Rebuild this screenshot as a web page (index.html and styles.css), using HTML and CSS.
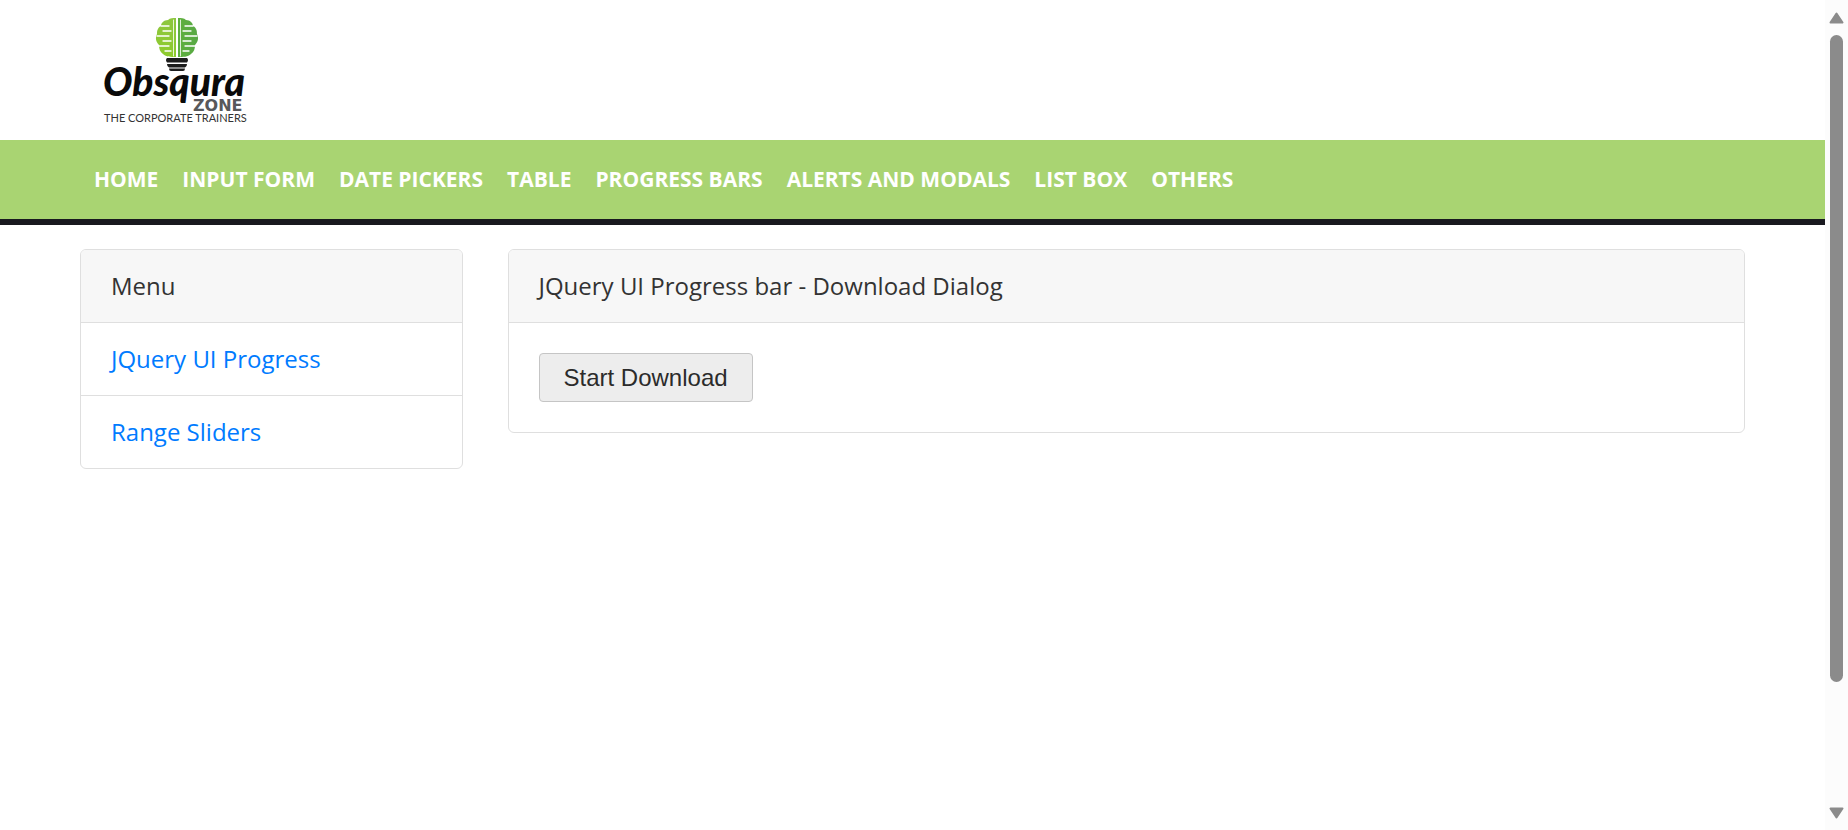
FILE: index.html
```html
<!DOCTYPE html>
<html lang="en">
<head>
<meta charset="utf-8">
<title>Obsqura Zone</title>
<link rel="stylesheet" href="styles.css">
</head>
<body>
<div class="page">
  <header class="header">
    <a class="logo" href="#" aria-label="Obsqura Zone home">
      <svg class="logo-art" viewBox="0 0 152 112" role="img" aria-label="Obsqura Zone, the corporate trainers">
        <defs>
          <linearGradient id="leafA" x1="0" y1="0" x2="0" y2="1"><stop offset="0" stop-color="#8dc63f"/><stop offset="1" stop-color="#8ecb2c"/></linearGradient>
          <linearGradient id="leafB" x1="0" y1="0" x2="1" y2="0"><stop offset="0" stop-color="#5fb03c"/><stop offset="1" stop-color="#57a845"/></linearGradient>
        </defs>
        <path fill="url(#leafA)" d="M76 4 C73 4 70 4 68 6 C64 6 61 9 61 12 C57 14 57 18 57 20 C55 24 56 28 59 31 C59 35 60 38 63 40 C66 43 71 43 76 43 Z"/>
        <path fill="url(#leafB)" d="M78 4 C81 4 84 4 86 6 C90 6 93 9 93 12 C97 14 97 18 97 20 C99 24 98 28 95 31 C95 35 94 38 91 40 C88 43 83 43 78 43 Z"/>
        <g fill="none" stroke="#fff" stroke-width="1.3" stroke-linecap="round">
          <path d="M77 3V44M73.500 6V42M80.500 6V42" stroke-width="0.800"/>
          <path d="M61 12H69M63 17H71M57 22H69M63 27H71M58 32H69M65 37H71"/>
          <path d="M93 12H85M91 17H83M97 22H85M91 27H83M96 32H85M89 37H83"/>
        </g>
        <path fill="#1c1c1c" d="M67 44H87Q89 46 87 48.500H67Q65 46 67 44ZM67 50H87Q87 53 85 53.500H69Q67 53 67 50ZM69 54.500H85Q85 57 83 57H71Q69 57 69 54.500Z"/>
        <text class="logo-name" x="3" y="82">Obsqura</text>
        <text class="logo-zone" x="93" y="97">ZONE</text>
        <text class="logo-tag" x="4" y="108">THE CORPORATE TRAINERS</text>
      </svg>
    </a>
  </header>
  <nav class="nav" aria-label="Main">
    <a href="#">HOME</a>
    <a href="#">INPUT FORM</a>
    <a href="#">DATE PICKERS</a>
    <a href="#">TABLE</a>
    <a href="#">PROGRESS BARS</a>
    <a href="#">ALERTS AND MODALS</a>
    <a href="#">LIST BOX</a>
    <a href="#">OTHERS</a>
  </nav>
  <main class="content">
    <aside class="card side">
      <div class="card-header">Menu</div>
      <ul class="menu">
        <li><a href="#">JQuery UI Progress</a></li>
        <li><a href="#">Range Sliders</a></li>
      </ul>
    </aside>
    <section class="card main">
      <div class="card-header">JQuery UI Progress bar - Download Dialog</div>
      <div class="card-body">
        <button class="download" type="button">Start Download</button>
      </div>
    </section>
  </main>
</div>
<div class="scrollbar" aria-hidden="true">
  <svg class="arrow" viewBox="0 0 15 12"><path d="M7.500 1.500L13.500 10.500H1.500Z"/></svg>
  <div class="track"><div class="thumb"></div></div>
  <svg class="arrow" viewBox="0 0 15 12"><path d="M7.500 10.500L1.500 1.500H13.500Z"/></svg>
</div>
</body>
</html>
```

FILE: styles.css
```css
* {
  box-sizing: border-box;
}

body {
  margin: 0;
  display: flex;
  min-height: 100vh;
  background: #fff;
  color: #333;
  font: 24px/36px "Open Sans", sans-serif;
}

.page {
  flex: 1;
  min-width: 0;
}

.header {
  padding: 14px 100px;
}

.logo,
.logo-art {
  display: block;
  width: 152px;
  height: 112px;
}

.logo-name {
  font: italic 900 39px Lato, sans-serif;
  fill: #0a0a0a;
}

.logo-zone {
  font: bold 16px "DejaVu Sans", sans-serif;
  fill: #58585a;
}

.logo-tag {
  font: 11px Lato, sans-serif;
  fill: #333;
}

.nav {
  display: flex;
  flex-wrap: wrap;
  padding: 21px 82px 22px;
  background: #a9d472;
  border-bottom: 6px solid #19191f;
}

.nav a {
  padding: 0 12px;
  color: #fff;
  font-size: 21px;
  font-weight: 700;
  text-decoration: none;
}

.content {
  display: grid;
  grid-template-columns: repeat(12, 1fr);
  align-items: start;
  column-gap: 45px;
  padding: 24px 80px;
}

.side {
  grid-column: span 3;
}

.main {
  grid-column: span 9;
}

.card {
  overflow: hidden;
  border: 1px solid #dfdfdf;
  border-radius: 6px;
}

.card-header {
  padding: 18px 30px;
  background: #f7f7f7;
  border-bottom: 1px solid #dfdfdf;
}

.menu {
  margin: 0;
  padding: 0;
  list-style: none;
}

.menu li {
  padding: 18px 30px;
}

.menu li + li {
  border-top: 1px solid #dfdfdf;
}

.menu a {
  color: #007bff;
  text-decoration: none;
}

.card-body {
  display: flex;
  padding: 30px;
}

.download {
  padding: 6px 24px;
  background: #ededed;
  border: 1px solid #c5c5c5;
  border-radius: 4px;
  color: #2b2b2b;
  font: 24px/35px "Liberation Sans", Arial, sans-serif;
}

.scrollbar {
  position: sticky;
  top: 0;
  display: flex;
  flex-direction: column;
  align-items: center;
  width: 23px;
  height: 100vh;
  padding: 12px 0 11px;
  background: #fcfcfc;
}

.arrow {
  width: 15px;
  height: 12px;
  fill: #8b8b8b;
  stroke: #8b8b8b;
  stroke-width: 2;
  stroke-linejoin: round;
}

.track {
  flex: 1;
  margin: 11px 0;
}

.thumb {
  width: 13px;
  height: 85%;
  border-radius: 7px;
  background: #8b8b8b;
}
```
